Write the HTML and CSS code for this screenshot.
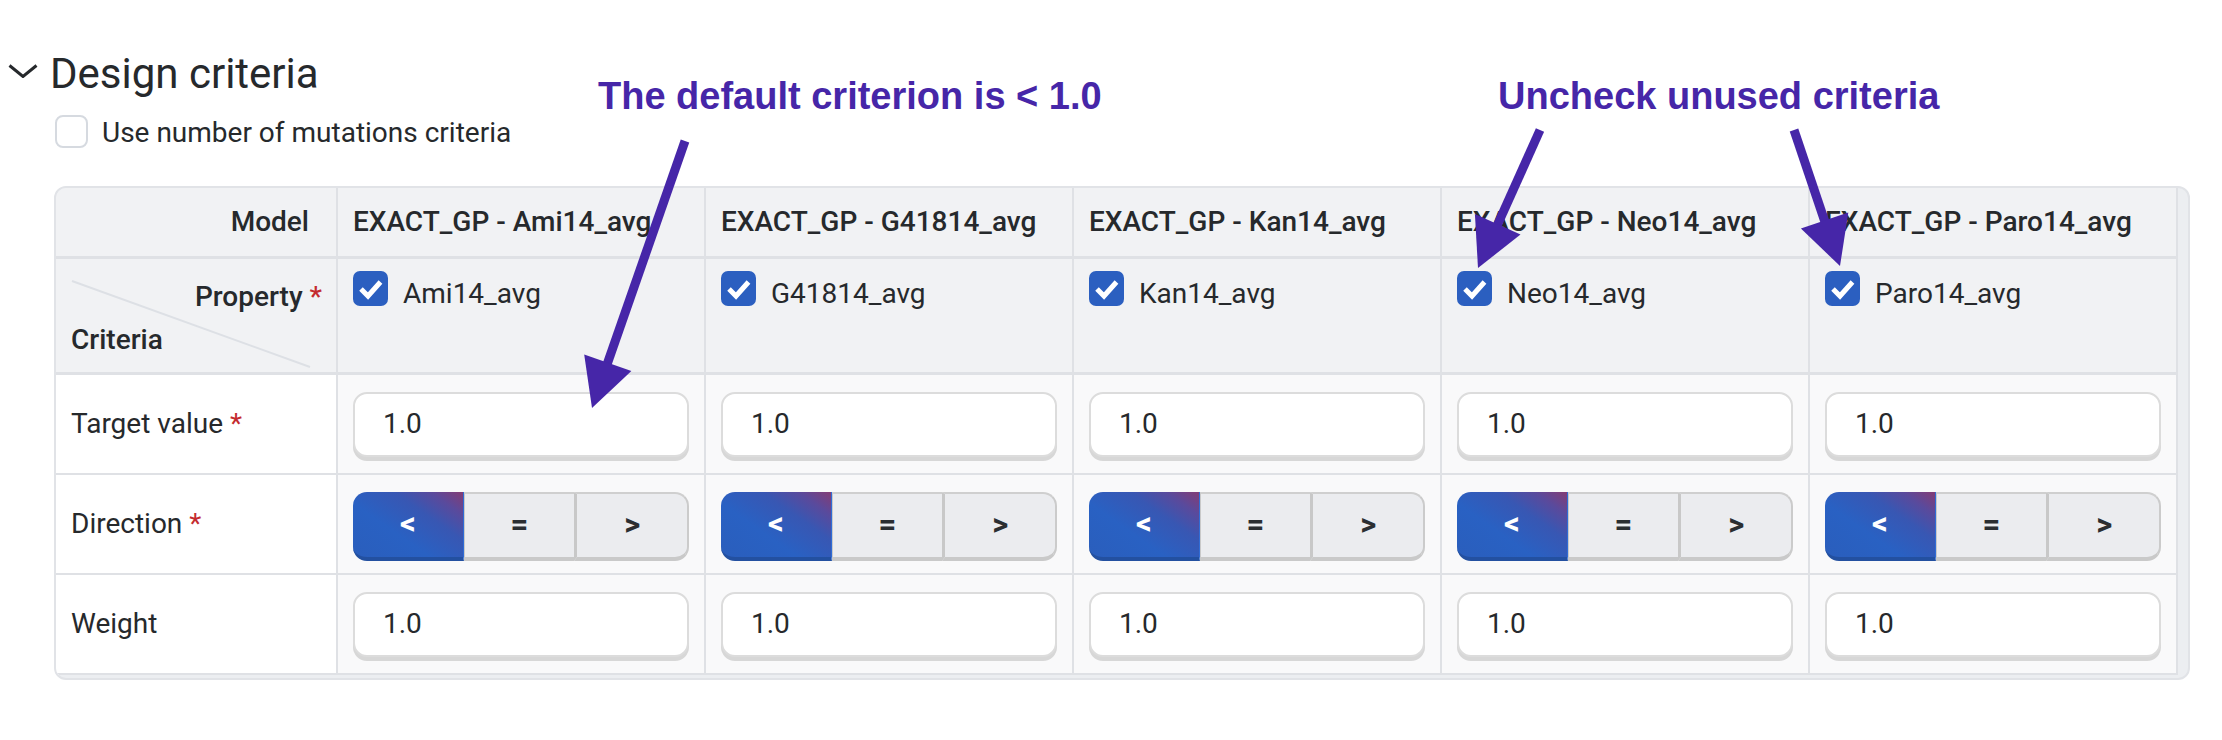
FILE: index.html
```html
<!DOCTYPE html>
<html lang="en">
<head>
<meta charset="utf-8">
<title>Design criteria</title>
<link rel="stylesheet" href="styles.css">
</head>
<body>
<div class="page">
  <div class="section-head">
    <svg class="chevron" width="30" height="14" viewBox="0 0 30 14"><polyline points="1.5,1.5 15,12.5 28.5,1.5" fill="none" stroke="#26292c" stroke-width="3"/></svg>
    <h2 class="title">Design criteria</h2>
  </div>
  <label class="option"><span class="box"></span><span class="option-text">Use number of mutations criteria</span></label>

  <div class="table-wrap">
    <div class="grid">
      <div class="cell head label-head">Model</div>
      <div class="cell head">EXACT_GP - Ami14_avg</div>
      <div class="cell head">EXACT_GP - G41814_avg</div>
      <div class="cell head">EXACT_GP - Kan14_avg</div>
      <div class="cell head">EXACT_GP - Neo14_avg</div>
      <div class="cell head">EXACT_GP - Paro14_avg</div>

      <div class="cell prop-label">
        <svg class="diag" width="280" height="113" viewBox="0 0 280 113"><line x1="16" y1="22" x2="254" y2="108" stroke="#dde0e5" stroke-width="2"/></svg>
        <span class="prop-title">Property <span class="req">*</span></span>
        <span class="crit-title">Criteria</span>
      </div>
      <div class="cell prop"><span class="check"><svg width="35" height="35" viewBox="0 0 35 35"><polyline points="8,18 15,25 27.5,11" fill="none" stroke="#fff" stroke-width="5"/></svg></span><span class="prop-name">Ami14_avg</span></div>
      <div class="cell prop"><span class="check"><svg width="35" height="35" viewBox="0 0 35 35"><polyline points="8,18 15,25 27.5,11" fill="none" stroke="#fff" stroke-width="5"/></svg></span><span class="prop-name">G41814_avg</span></div>
      <div class="cell prop"><span class="check"><svg width="35" height="35" viewBox="0 0 35 35"><polyline points="8,18 15,25 27.5,11" fill="none" stroke="#fff" stroke-width="5"/></svg></span><span class="prop-name">Kan14_avg</span></div>
      <div class="cell prop"><span class="check"><svg width="35" height="35" viewBox="0 0 35 35"><polyline points="8,18 15,25 27.5,11" fill="none" stroke="#fff" stroke-width="5"/></svg></span><span class="prop-name">Neo14_avg</span></div>
      <div class="cell prop"><span class="check"><svg width="35" height="35" viewBox="0 0 35 35"><polyline points="8,18 15,25 27.5,11" fill="none" stroke="#fff" stroke-width="5"/></svg></span><span class="prop-name">Paro14_avg</span></div>

      <div class="cell label"><span>Target value <span class="req">*</span></span></div>
      <div class="cell val"><div class="input">1.0</div></div>
      <div class="cell val"><div class="input">1.0</div></div>
      <div class="cell val"><div class="input">1.0</div></div>
      <div class="cell val"><div class="input">1.0</div></div>
      <div class="cell val"><div class="input">1.0</div></div>

      <div class="cell label"><span>Direction <span class="req">*</span></span></div>
      <div class="cell val"><div class="seg"><span class="seg-btn on">&lt;</span><span class="seg-btn mid">=</span><span class="seg-btn last">&gt;</span></div></div>
      <div class="cell val"><div class="seg"><span class="seg-btn on">&lt;</span><span class="seg-btn mid">=</span><span class="seg-btn last">&gt;</span></div></div>
      <div class="cell val"><div class="seg"><span class="seg-btn on">&lt;</span><span class="seg-btn mid">=</span><span class="seg-btn last">&gt;</span></div></div>
      <div class="cell val"><div class="seg"><span class="seg-btn on">&lt;</span><span class="seg-btn mid">=</span><span class="seg-btn last">&gt;</span></div></div>
      <div class="cell val"><div class="seg"><span class="seg-btn on">&lt;</span><span class="seg-btn mid">=</span><span class="seg-btn last">&gt;</span></div></div>

      <div class="cell label"><span>Weight</span></div>
      <div class="cell val"><div class="input">1.0</div></div>
      <div class="cell val"><div class="input">1.0</div></div>
      <div class="cell val"><div class="input">1.0</div></div>
      <div class="cell val"><div class="input">1.0</div></div>
      <div class="cell val"><div class="input">1.0</div></div>
    </div>
  </div>

  <div class="annot annot-1">The default criterion is &lt; 1.0</div>
  <div class="annot annot-2">Uncheck unused criteria</div>
  <svg class="arrows" width="2222" height="740" viewBox="0 0 2222 740">
    <g stroke="#4626a8" stroke-width="9" fill="none">
      <line x1="685" y1="141" x2="606.5" y2="366"/>
      <line x1="1540" y1="130" x2="1496.5" y2="227"/>
      <line x1="1794" y1="130" x2="1825.5" y2="223.5"/>
    </g>
    <g fill="#4626a8">
      <polygon points="592,408 631.4,370.9 584.2,354.5"/>
      <polygon points="1478,268 1520.5,234.5 1474.9,213.9"/>
      <polygon points="1840,266 1848.3,212.5 1800.9,228.5"/>
    </g>
  </svg>
</div>
</body>
</html>
```
FILE: styles.css
```css
* { box-sizing: border-box; }
html, body { margin: 0; padding: 0; background: #fff; }
body { font-family: Roboto, "Noto Sans", sans-serif; color: #26292c; }

.page { position: relative; width: 2222px; height: 740px; padding-top: 50px; overflow: hidden; }

.section-head { display: flex; align-items: flex-start; height: 48px; padding-left: 8px; }
.chevron { flex: none; margin-top: 14px; }
.title { margin: 0 0 0 12px; font-size: 42px; font-weight: 400; line-height: 48px; }

.option { display: flex; align-items: center; gap: 14px; margin: 15px 0 0 55px; font-size: 28px; line-height: 33px; }
.option-text { padding-top: 3px; }
.box { flex: none; width: 33px; height: 33px; border: 2px solid #d6dae0; border-radius: 8px; background: #fff; }

.table-wrap {
  margin: 37px 0 0 54px;
  width: 2136px;
  border: 2px solid #e1e3e7;
  border-radius: 12px;
  background: #eceef1;
  padding: 0 10px 3px 0;
  overflow: hidden;
}
.grid {
  display: grid;
  grid-template-columns: 282px repeat(5, 368px);
  grid-template-rows: 71px 116px 100px 100px 100px;
}
.cell {
  display: flex;
  align-items: center;
  padding: 0 15px;
  border-right: 2px solid #dfe1e5;
  border-bottom: 2px solid #dfe1e5;
  font-size: 28px;
  line-height: 34px;
  white-space: nowrap;
}
.head { background: #f1f2f4; font-weight: 500; border-bottom-width: 3px; }
.label-head { justify-content: flex-end; padding-right: 27px; }

.prop-label {
  position: relative;
  flex-direction: column;
  align-items: stretch;
  padding: 21px 14px 0 15px;
  background: #f1f2f4;
  border-bottom-width: 3px;
  font-weight: 500;
}
.diag { position: absolute; left: 0; top: 0; }
.prop-title { position: relative; text-align: right; }
.crit-title { position: relative; margin-top: 9px; }
.req { color: #c42b2f; }

.prop { align-items: flex-start; gap: 15px; padding-top: 12px; background: #f1f2f4; border-bottom-width: 3px; line-height: 35px; }
.prop-name { padding-top: 5px; }
.check { flex: none; display: flex; width: 35px; height: 35px; border-radius: 7px; background: #2b5fc0; }

.label { background: #fff; }
.val { background: #f9f9fa; }

.input {
  display: flex;
  align-items: center;
  width: 100%;
  height: 65px;
  padding-left: 28px;
  border: 2px solid #dcdcdc;
  border-radius: 14px;
  background: #fff;
  box-shadow: 0 4px 0 #d7d7d7;
  font-size: 28px;
}

.seg { display: flex; width: 100%; height: 69px; margin-top: 4px; }
.seg-btn {
  flex: 1;
  display: flex;
  align-items: center;
  justify-content: center;
  font-size: 31px;
  font-weight: 700;
  color: #2b2e31;
  background: #ebecef;
  border-top: 2px solid #cfcfcf;
  border-bottom: 4px solid #c9c9c9;
}
.seg-btn.on {
  color: #fff;
  border-top: none;
  border-bottom: 4px solid #2350a0;
  border-right: 1px solid #2f6cd6;
  border-radius: 14px 0 0 14px;
  background: linear-gradient(215deg, #843c74 0%, #5a4a9c 16%, #3857b3 34%, #2961c3 62%, #2a5ebc 100%);
}
.seg-btn.mid { border-left: 1px solid #c9c9c9; }
.seg-btn.last { border-left: 3px solid #c8c8c8; border-right: 2px solid #cbcbcb; border-radius: 0 14px 14px 0; }

.annot {
  position: absolute;
  top: 74px;
  font-family: "Liberation Sans", Arial, sans-serif;
  font-weight: 700;
  font-size: 38px;
  line-height: 44px;
  color: #4626a8;
  white-space: nowrap;
}
.annot-1 { left: 598px; }
.annot-2 { left: 1498px; }
.arrows { position: absolute; left: 0; top: 0; }
```
